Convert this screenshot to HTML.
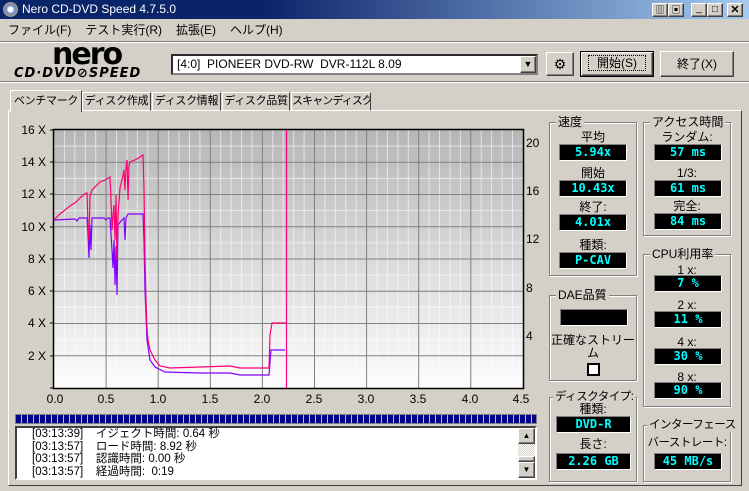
<!DOCTYPE html>
<html><head><meta charset="utf-8"><style>
*{box-sizing:border-box}
body{margin:0;width:749px;height:491px;overflow:hidden;background:#d4d0c8;font-family:"Liberation Sans","Noto Sans CJK JP",sans-serif;font-size:12px;color:#000;position:relative}
.a{position:absolute}
.title{left:0;top:0;width:749px;height:19px;background:linear-gradient(90deg,#0a246a 0%,#0a246a 35%,#a6caf0 100%);color:#fff;font-size:12px;line-height:19px;padding-left:22px}
.menu{top:21px;left:0;height:18px;line-height:18px}
.menu span{margin:0 6px 0 8px}
.hr{height:2px;border-top:1px solid #808080;border-bottom:1px solid #fff}
.btn{background:#d4d0c8;border:1px solid;border-color:#fff #404040 #404040 #fff;box-shadow:inset -1px -1px #808080;text-align:center}
.grp{border:1px solid #808080;box-shadow:1px 1px #fff,inset 1px 1px #fff}
.gt{position:absolute;top:-8px;left:6px;background:#d4d0c8;padding:0 2px;line-height:14px;white-space:nowrap}
.lbl{position:absolute;width:100%;text-align:center;line-height:13px;white-space:nowrap}
.val{position:absolute;background:#000;color:#0ff;font-family:"DejaVu Sans Mono","Liberation Mono",monospace;font-weight:bold;font-size:12px;text-align:center;line-height:15px;height:17px;border:1px solid;border-color:#808080 #fff #fff #808080}
.tab{top:92px;height:19px;line-height:17px;border:1px solid;border-color:#fff #404040 transparent #fff;font-size:11px;letter-spacing:-0.3px;white-space:nowrap;overflow:hidden;text-align:center}
</style></head><body>
<div class="a title"><span class="a" style="left:3px;top:2px;width:15px;height:15px;border-radius:50%;background:radial-gradient(#fff 20%,#6a8cc8 40%,#c0a060 80%)"></span>Nero CD-DVD Speed 4.7.5.0</div>
<div class="a btn" style="left:652px;top:3px;width:16px;height:14px;font-size:9px;line-height:12px">▥</div>
<div class="a btn" style="left:668px;top:3px;width:16px;height:14px;font-size:9px;line-height:12px">▣</div>
<div class="a btn" style="left:691px;top:3px;width:16px;height:14px;font-size:10px;line-height:10px">_</div>
<div class="a btn" style="left:707px;top:3px;width:16px;height:14px;font-size:10px;line-height:12px">□</div>
<div class="a btn" style="left:727px;top:3px;width:16px;height:14px;font-size:11px;line-height:12px;font-weight:bold">✕</div>
<div class="a menu"><span>ファイル(F)</span><span>テスト実行(R)</span><span>拡張(E)</span><span>ヘルプ(H)</span></div>
<div class="a hr" style="left:0;top:41px;width:749px"></div>
<div class="a" style="left:52px;top:40px;font-size:30px;font-weight:bold;letter-spacing:-2px;line-height:30px;font-family:'DejaVu Sans',sans-serif">nero</div>
<div class="a" style="left:14px;top:67px;font-size:13px;font-weight:bold;font-style:italic;letter-spacing:1px;font-family:'DejaVu Sans',sans-serif;line-height:14px">CD·DVD<span style="font-style:normal">⊘</span>SPEED</div>
<div class="a" style="left:171px;top:54px;width:367px;height:21px;background:#fff;border:2px inset #808080;padding-left:4px;line-height:17px">[4:0]&nbsp; PIONEER DVD-RW&nbsp; DVR-112L 8.09</div>
<div class="a btn" style="left:520px;top:56px;width:16px;height:17px;font-size:9px;line-height:15px">▼</div>
<div class="a btn" style="left:546px;top:52px;width:28px;height:24px;font-size:14px;line-height:22px">⚙</div>
<div class="a" style="left:580px;top:51px;width:74px;height:26px;border:1px solid #000"><div class="btn" style="width:72px;height:24px;line-height:20px"><span style="border:1px dotted #000;padding:0 8px">開始(S)</span></div></div>
<div class="a btn" style="left:660px;top:51px;width:74px;height:26px;line-height:24px">終了(X)</div>
<div class="a hr" style="left:0;top:81px;width:749px"></div>
<div class="a" style="left:8px;top:110px;width:734px;height:376px;border:1px solid;border-color:#fff #404040 #404040 #fff"></div>
<div class="a tab" style="left:10px;top:90px;width:72px;height:22px;background:#d4d0c8;border-bottom:none;line-height:20px;z-index:2">ベンチマーク</div>
<div class="a tab" style="left:82px;width:69px">ディスク作成</div>
<div class="a tab" style="left:152px;width:69px">ディスク情報</div>
<div class="a tab" style="left:222px;width:68px">ディスク品質</div>
<div class="a tab" style="left:291px;width:80px;letter-spacing:-0.9px">スキャンディスク</div>

<svg class="a" style="left:0;top:110px" width="545" height="300" viewBox="0 110 545 300">
<defs><linearGradient id="g" x1="0" y1="0" x2="0" y2="1"><stop offset="0" stop-color="#b6b6b6"/><stop offset="1" stop-color="#fdfdfd"/></linearGradient></defs>
<rect x="54" y="130" width="469" height="258" fill="url(#g)"/>
<g stroke="#fff" stroke-width="1" opacity=".6">
<path d="M64.4 130V388M74.8 130V388M85.3 130V388M95.7 130V388M116.5 130V388M126.9 130V388M137.4 130V388M147.8 130V388M168.6 130V388M179 130V388M189.5 130V388M199.9 130V388M220.7 130V388M231.1 130V388M241.6 130V388M252 130V388M272.8 130V388M283.2 130V388M293.7 130V388M304.1 130V388M324.9 130V388M335.3 130V388M345.8 130V388M356.2 130V388M377 130V388M387.4 130V388M397.9 130V388M408.3 130V388M429.1 130V388M439.5 130V388M450 130V388M460.4 130V388M481.2 130V388M491.6 130V388M502.1 130V388M512.5 130V388"/>
<path d="M54 146.1H523M54 178.4H523M54 210.6H523M54 242.9H523M54 275.1H523M54 307.4H523M54 339.6H523M54 371.9H523"/>
</g>
<g stroke="#808080" stroke-width="1">
<path d="M106.1 130V388M158.2 130V388M210.3 130V388M262.4 130V388M314.5 130V388M366.6 130V388M418.7 130V388M470.8 130V388"/>
<path d="M54 162.3H523M54 194.5H523M54 226.8H523M54 259H523M54 291.3H523M54 323.5H523M54 355.8H523"/>
</g>
<rect x="53.5" y="129.5" width="470" height="259" fill="none" stroke="#000" stroke-width="1.5"/>
<g stroke="#000"><path d="M50 130H53M50 162H53M50 194H53M50 227H53M50 259H53M50 291H53M50 323H53M50 356H53M50 388H53"/></g>
<path d="M286.5 130V388" stroke="#ff0080" stroke-width="1.2"/>
<polyline fill="none" stroke="#8000ff" stroke-width="1.2" points="54,220 75,219 77,221 79,218 87,218 88,235 89,258 90,225 91,250 92,218 104,218 106,220 108,218 110,218 112,250 113,268 114,240 115,285 116,246 117,295 118,225 121,221 124,218 125,240 126,218 128,214 143,214 144,240 145,290 147,340 150,360 155,367 165,372 200,373 230,373 240,375 258,375 269,375 271,350 285,350"/>
<polyline fill="none" stroke="#ff0070" stroke-width="1.2" points="54,220 60,214 70,206 76,202 80,198 86,193 87,193 88,225 89,240 90,196 92,190 100,182 105,180 110,177 111,200 112,230 113,215 114,205 115,240 116,195 117,260 118,215 119,202 120,188 122,180 124,170 125,190 126,168 127,160 128,200 129,165 130,162 137,159 143,155 144,189 145,260 146,300 147,328 148,340 150,350 155,360 160,366 170,368 200,367 230,366 240,368 250,368 269,368 270,335 272,323 286,323"/>
<g font-family="Liberation Sans,sans-serif" font-size="12" fill="#000" text-anchor="end">
<text x="46" y="134">16 X</text><text x="46" y="166">14 X</text><text x="46" y="198">12 X</text><text x="46" y="231">10 X</text><text x="46" y="263">8 X</text><text x="46" y="295">6 X</text><text x="46" y="327">4 X</text><text x="46" y="360">2 X</text>
</g>
<g font-family="Liberation Sans,sans-serif" font-size="12" fill="#000">
<text x="526" y="147">20</text><text x="526" y="195">16</text><text x="526" y="243">12</text><text x="526" y="292">8</text><text x="526" y="340">4</text>
</g>
<g font-family="Liberation Sans,sans-serif" font-size="12" fill="#000" text-anchor="middle">
<text x="55" y="403">0.0</text><text x="106" y="403">0.5</text><text x="158" y="403">1.0</text><text x="210" y="403">1.5</text><text x="262" y="403">2.0</text><text x="314" y="403">2.5</text><text x="366" y="403">3.0</text><text x="418" y="403">3.5</text><text x="470" y="403">4.0</text><text x="521" y="403">4.5</text>
</g>
</svg>
<div class="a" style="left:15px;top:414px;width:522px;height:10px;background:repeating-linear-gradient(90deg,#00008a 0 5px,#c0c0e0 5px 6px);border:1px solid #808080"></div>
<div class="a" style="left:15px;top:426px;width:522px;height:54px;background:#fff;border:2px solid;border-color:#404040 #fff #fff #404040;font-size:11.5px;line-height:12.5px;padding-left:15px;padding-top:0">
<div>[03:13:39]&nbsp;&nbsp;&nbsp; イジェクト時間: 0.64 秒</div>
<div>[03:13:57]&nbsp;&nbsp;&nbsp; ロード時間: 8.92 秒</div>
<div>[03:13:57]&nbsp;&nbsp;&nbsp; 認識時間: 0.00 秒</div>
<div>[03:13:57]&nbsp;&nbsp;&nbsp; 経過時間:&nbsp; 0:19</div>
</div>
<div class="a" style="left:518px;top:428px;width:17px;height:50px;background:repeating-conic-gradient(#fff 0 25%,#d4d0c8 0 50%) 0 0/2px 2px"></div>
<div class="a btn" style="left:518px;top:428px;width:17px;height:16px;font-size:8px;line-height:14px">▲</div>
<div class="a btn" style="left:518px;top:456px;width:17px;height:6px"></div>
<div class="a btn" style="left:518px;top:462px;width:17px;height:16px;font-size:8px;line-height:14px">▼</div>

<div class="a grp" style="left:549px;top:122px;width:88px;height:154px"><span class="gt">速度</span>
<div class="lbl" style="top:8px">平均</div><div class="val" style="left:9px;top:21px;width:68px">5.94x</div>
<div class="lbl" style="top:44px">開始</div><div class="val" style="left:9px;top:57px;width:68px">10.43x</div>
<div class="lbl" style="top:78px">終了:</div><div class="val" style="left:9px;top:91px;width:68px">4.01x</div>
<div class="lbl" style="top:116px">種類:</div><div class="val" style="left:9px;top:129px;width:68px">P-CAV</div></div>
<div class="a grp" style="left:643px;top:122px;width:88px;height:114px"><span class="gt">アクセス時間</span>
<div class="lbl" style="top:8px">ランダム:</div><div class="val" style="left:10px;top:21px;width:68px">57 ms</div>
<div class="lbl" style="top:44px">1/3:</div><div class="val" style="left:10px;top:57px;width:68px">61 ms</div>
<div class="lbl" style="top:77px">完全:</div><div class="val" style="left:10px;top:90px;width:68px">84 ms</div></div>
<div class="a grp" style="left:643px;top:254px;width:88px;height:153px"><span class="gt">CPU利用率</span>
<div class="lbl" style="top:9px">1 x:</div><div class="val" style="left:10px;top:20px;width:68px">7 %</div>
<div class="lbl" style="top:44px">2 x:</div><div class="val" style="left:10px;top:56px;width:68px">11 %</div>
<div class="lbl" style="top:81px">4 x:</div><div class="val" style="left:10px;top:93px;width:68px">30 %</div>
<div class="lbl" style="top:116px">8 x:</div><div class="val" style="left:10px;top:127px;width:68px">90 %</div></div>
<div class="a grp" style="left:549px;top:295px;width:88px;height:86px"><span class="gt">DAE品質</span>
<div class="val" style="left:10px;top:13px;width:68px"></div>
<div class="lbl" style="top:38px;white-space:normal">正確なストリー<br>ム</div>
<div class="a" style="left:37px;top:67px;width:13px;height:13px;background:#fff;border:2px solid #000"></div></div>
<div class="a grp" style="left:549px;top:397px;width:88px;height:85px"><span class="gt" style="left:3px;font-size:11.5px;letter-spacing:-0.5px">ディスクタイプ:</span>
<div class="lbl" style="top:5px">種類:</div><div class="val" style="left:6px;top:18px;width:75px">DVD-R</div>
<div class="lbl" style="top:40px">長さ:</div><div class="val" style="left:6px;top:55px;width:75px">2.26 GB</div></div>
<div class="a grp" style="left:643px;top:425px;width:88px;height:57px"><span class="gt" style="left:3px;font-size:11.5px;letter-spacing:-0.5px">インターフェース</span>
<div class="lbl" style="top:11px;font-size:11.5px;letter-spacing:-0.5px">バーストレート:</div><div class="val" style="left:10px;top:27px;width:68px">45 MB/s</div></div>
</body></html>
